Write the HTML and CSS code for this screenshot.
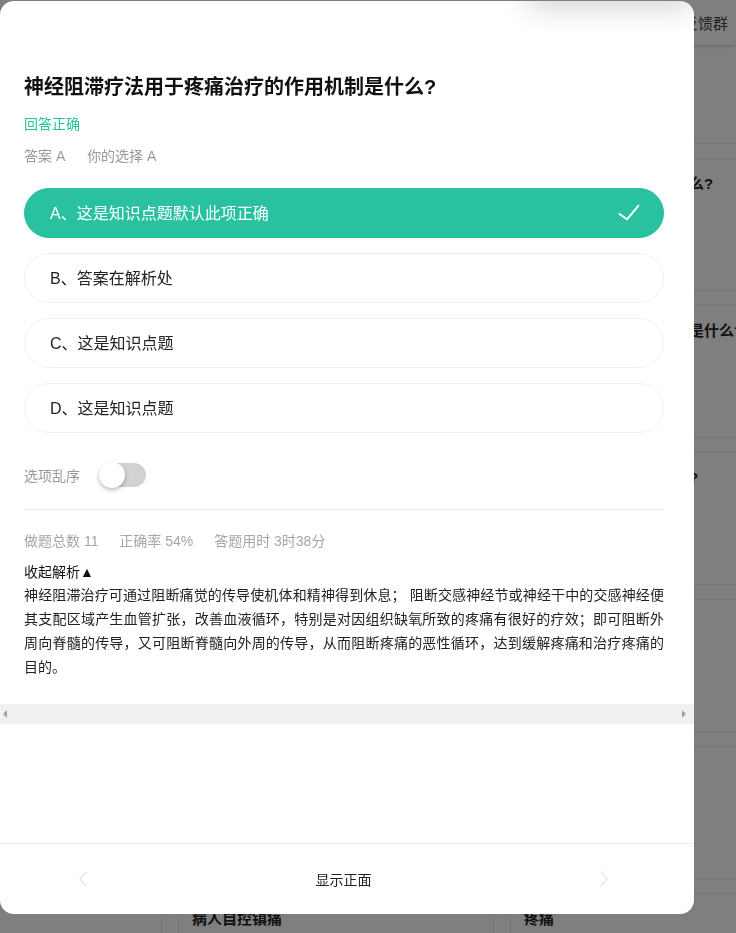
FILE: index.html
```html
<!DOCTYPE html>
<html lang="zh-CN">
<head>
    <meta charset="UTF-8">
    <meta name="viewport" content="width=device-width, initial-scale=1.0">
    <title>题库练习 - 答题卡</title>
    <link rel="stylesheet" href="styles.css">
</head>
<body>
    <!-- page behind the dialog -->
    <div class="page">
        <div class="topbar">
            <span class="topbar-link">加入反馈群</span>
        </div>
        <div class="card-grid">
            <div class="card"><div class="card-title">疼痛的分类</div></div>
            <div class="card"><div class="card-title">疼痛评估方法</div></div>
            <div class="card"><div class="card-title">镇痛药物</div></div>

            <div class="card"><div class="card-title">癌痛的三阶梯治疗</div></div>
            <div class="card"><div class="card-title">神经病理性疼痛的特点</div></div>
            <div class="card"><div class="card-title">疼痛治疗的作用机制是什么?</div></div>

            <div class="card"><div class="card-title">慢性疼痛</div></div>
            <div class="card"><div class="card-title">术后镇痛的常用方法</div></div>
            <div class="card"><div class="card-title">神经阻滞疗法的作用机制是什么?</div></div>

            <div class="card"><div class="card-title">头痛</div></div>
            <div class="card"><div class="card-title">交感神经阻滞</div></div>
            <div class="card"><div class="card-title">疼痛患者自控镇痛的原理?</div></div>

            <div class="card"><div class="card-title">腰腿痛</div></div>
            <div class="card"><div class="card-title">硬膜外阻滞</div></div>
            <div class="card"><div class="card-title">星状神经节</div></div>

            <div class="card"><div class="card-title">颈肩痛</div></div>
            <div class="card"><div class="card-title">疼痛门控学说</div></div>
            <div class="card"><div class="card-title">三叉神经痛</div></div>

            <div class="card"><div class="card-title">关节痛</div></div>
            <div class="card"><div class="card-title">病人自控镇痛</div></div>
            <div class="card"><div class="card-title">疼痛</div></div>
        </div>
    </div>

    <div class="mask"></div>

    <div class="modal">
        <div class="modal-glow"></div>
        <div class="modal-body">
            <div class="question">
                <h2 class="question-title">神经阻滞疗法用于疼痛治疗的作用机制是什么?</h2>
                <div class="result">回答正确</div>
                <div class="answer-line">
                    <span>答案 A</span>
                    <span>你的选择 A</span>
                </div>

                <div class="option-list">
                    <div class="option option-right">
                        <span>A、这是知识点题默认此项正确</span>
                        <svg class="option-check" width="24" height="24" viewBox="0 0 24 24">
                            <path d="M3.5 14l7.5 5.3L22.3 5.8" fill="none" stroke="#fff" stroke-width="2" stroke-linecap="round" stroke-linejoin="round"/>
                        </svg>
                    </div>
                    <div class="option"><span>B、答案在解析处</span></div>
                    <div class="option"><span>C、这是知识点题</span></div>
                    <div class="option"><span>D、这是知识点题</span></div>
                </div>

                <div class="shuffle-row">
                    <span class="shuffle-label">选项乱序</span>
                    <span class="switch"><span class="switch-knob"></span></span>
                </div>

                <div class="stats">
                    <span>做题总数 11</span>
                    <span>正确率 54%</span>
                    <span>答题用时 3时38分</span>
                </div>

                <div class="analysis-toggle">收起解析▲</div>
                <p class="analysis-text">神经阻滞治疗可通过阻断痛觉的传导使机体和精神得到休息； 阻断交感神经节或神经干中的交感神经便其支配区域产生血管扩张，改善血液循环，特别是对因组织缺氧所致的疼痛有很好的疗效；即可阻断外周向脊髓的传导，又可阻断脊髓向外周的传导，从而阻断疼痛的恶性循环，达到缓解疼痛和治疗疼痛的目的。</p>
            </div>

            <div class="hscroll">
                <span class="hscroll-arrow hscroll-left"></span>
                <span class="hscroll-arrow hscroll-right"></span>
            </div>
        </div>

        <div class="modal-footer">
            <svg class="nav-arrow" width="8" height="16" viewBox="0 0 8 16">
                <path d="M7.5 0.5L0.8 8l6.7 7.5" fill="none" stroke="#d4d4d4" stroke-width="1"/>
            </svg>
            <span class="flip-btn">显示正面</span>
            <svg class="nav-arrow" width="8" height="16" viewBox="0 0 8 16">
                <path d="M0.5 0.5L7.2 8l-6.7 7.5" fill="none" stroke="#d4d4d4" stroke-width="1"/>
            </svg>
        </div>
    </div>
</body>
</html>
```

FILE: styles.css
```css
* {
    margin: 0;
    padding: 0;
    box-sizing: border-box;
}

html, body {
    height: 100%;
    overflow: hidden;
}

body {
    font-family: 'Liberation Sans', 'Noto Sans CJK SC', sans-serif;
    background: #fff;
    color: #333;
}

/* page behind */
.page {
    width: 100%;
}

.topbar {
    height: 45px;
    display: flex;
    align-items: center;
    justify-content: flex-end;
    padding-right: 8px;
    background: #fff;
    box-shadow: 0 2px 4px rgba(0,0,0,0.12);
    position: relative;
}

.topbar-link {
    font-size: 15px;
    color: #444;
}

.card-grid {
    display: grid;
    grid-template-columns: repeat(3, 316px);
    grid-template-rows: 99px repeat(6, 133px);
    column-gap: 16px;
    row-gap: 14px;
    margin-left: -154px;
}

.card {
    border: 1px solid #eee;
    background: #fff;
    padding: 14px 13px;
}

.card-title {
    font-size: 15px;
    line-height: 22px;
    font-weight: bold;
    color: #222;
    white-space: nowrap;
}

.mask {
    position: fixed;
    top: 0;
    left: 0;
    right: 0;
    bottom: 0;
    z-index: 10;
    background: rgba(0,0,0,0.5);
}

/* dialog */
.modal {
    position: fixed;
    top: 1px;
    left: 0;
    z-index: 11;
    width: 694px;
    height: 913px;
    background: #fff;
    border-radius: 14px;
    overflow: hidden;
    display: flex;
    flex-direction: column;
}

.modal-glow {
    position: absolute;
    top: -34px;
    left: 535px;
    width: 150px;
    height: 34px;
    box-shadow: 0 0 30px 6px rgba(0,0,0,0.18);
}

.modal-body {
    flex: 1;
}

.question {
    padding: 72px 30px 25px 24px;
}

.question-title {
    font-size: 20px;
    line-height: 28px;
    font-weight: bold;
    color: #111;
}

.result {
    margin-top: 13px;
    font-size: 14px;
    line-height: 20px;
    color: #2ac1a0;
}

.answer-line {
    margin-top: 12px;
    font-size: 14px;
    line-height: 20px;
    color: #999;
}

.answer-line span {
    margin-right: 18px;
}

.option-list {
    margin-top: 22px;
    display: flex;
    flex-direction: column;
    gap: 15px;
}

.option {
    height: 50px;
    border: 1px solid #f0f0f0;
    border-radius: 25px;
    display: flex;
    align-items: center;
    justify-content: space-between;
    padding: 0 23px 2px 25px;
    font-size: 16px;
    color: #222;
}

.option-right {
    background: #2ac1a0;
    border-color: #2ac1a0;
    color: #fff;
}

.shuffle-row {
    margin-top: 30px;
    padding-bottom: 22px;
    border-bottom: 1px solid #eee;
    display: flex;
    align-items: center;
    gap: 20px;
}

.shuffle-label {
    font-size: 14px;
    color: #999;
}

.switch {
    width: 46px;
    height: 24px;
    border-radius: 12px;
    background: #d2d2d2;
    display: flex;
    align-items: center;
}

.switch-knob {
    width: 26px;
    height: 26px;
    margin-left: -1px;
    border-radius: 50%;
    background: #fff;
    box-shadow: 0 2px 4px rgba(0,0,0,0.28);
}

.stats {
    margin-top: 21px;
    font-size: 14px;
    line-height: 20px;
    color: #a6a6a6;
}

.stats span {
    margin-right: 17px;
}

.analysis-toggle {
    margin-top: 10px;
    font-size: 14px;
    line-height: 22px;
    color: #111;
}

.analysis-text {
    font-size: 14px;
    line-height: 24px;
    color: #222;
    text-align: justify;
}

.hscroll {
    height: 20px;
    background: #f1f1f1;
    display: flex;
    align-items: center;
    justify-content: space-between;
    padding: 0 8px 0 3px;
}

.hscroll-arrow {
    width: 0;
    height: 0;
    border-top: 4px solid transparent;
    border-bottom: 4px solid transparent;
}

.hscroll-left {
    border-right: 4px solid #a3a3a3;
}

.hscroll-right {
    border-left: 4px solid #a3a3a3;
}

.modal-footer {
    height: 71px;
    border-top: 1px solid #eee;
    display: flex;
    align-items: center;
    justify-content: space-between;
    padding: 0 86px 0 79px;
}

.flip-btn {
    font-size: 14px;
    color: #222;
}
```
